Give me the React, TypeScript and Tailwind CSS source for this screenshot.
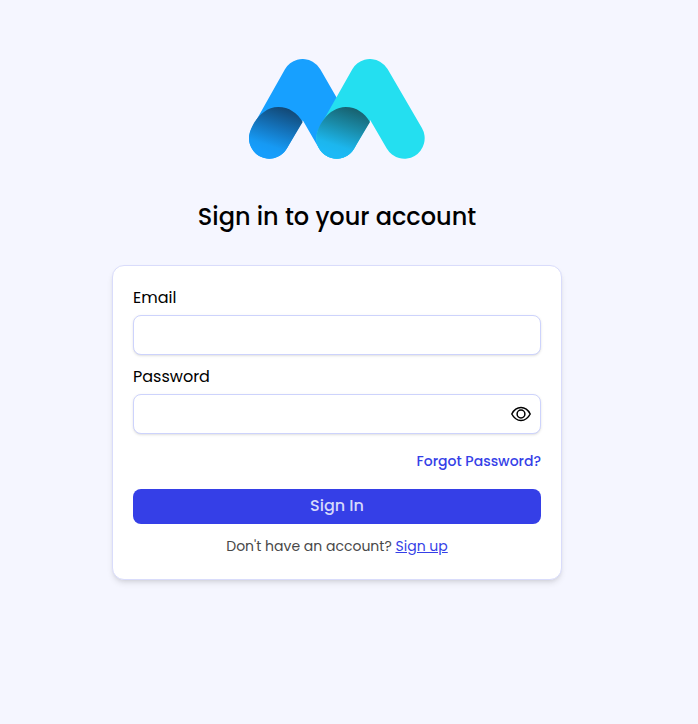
import { useState } from "react";

function Logo() {
  return (
    <svg viewBox="27 27 528 300" className="h-[100px] w-44" role="img" aria-label="Logo">
      <defs>
        <linearGradient id="foldBlue" gradientUnits="userSpaceOnUse" x1="140" y1="165" x2="92" y2="312">
          <stop offset="0" stopColor="#12426b" />
          <stop offset="0.45" stopColor="#146fb5" />
          <stop offset="0.85" stopColor="#1699f3" />
          <stop offset="1" stopColor="#169dfb" />
        </linearGradient>
        <linearGradient id="foldTeal" gradientUnits="userSpaceOnUse" x1="342" y1="165" x2="294" y2="312">
          <stop offset="0" stopColor="#175a65" />
          <stop offset="0.45" stopColor="#1a8ba8" />
          <stop offset="0.85" stopColor="#1cb6ed" />
          <stop offset="1" stopColor="#1cb9f5" />
        </linearGradient>
      </defs>
      <path d="M88 265 L188 88 L290 265" fill="none" stroke="#17a0ff" strokeWidth="122" strokeLinecap="round" strokeLinejoin="round" />
      <path d="M290 265 L390 88 L493 265" fill="none" stroke="#24dff0" strokeWidth="122" strokeLinecap="round" strokeLinejoin="round" />
      <path d="M188 216 L141 295 A61 61 0 0 1 27 265 C27 233 62 171 115 171 C147 171 172 189 188 216 Z" fill="url(#foldBlue)" />
      <path d="M390 216 L343 295 A61 61 0 0 1 229 265 C229 233 264 171 317 171 C349 171 374 189 390 216 Z" fill="url(#foldTeal)" />
    </svg>
  );
}

function EyeIcon() {
  return (
    <svg viewBox="0 0 20 16" className="h-4 w-5" fill="none" stroke="currentColor" strokeWidth="1.5" strokeLinejoin="round" aria-hidden="true">
      <path d="M0.8 8 C3 3.8 6.2 1.6 10 1.6 C13.8 1.6 17 3.8 19.2 8 C17 12.2 13.8 14.4 10 14.4 C6.2 14.4 3 12.2 0.8 8 Z" />
      <circle cx="10" cy="8" r="3.9" />
    </svg>
  );
}

const inputClass =
  "h-10 w-full rounded-lg border border-[#cdd3fc] bg-white px-3 text-base shadow-sm outline-none focus:border-[#353fe7]";

export default function App() {
  const [visible, setVisible] = useState(false);

  return (
    <main className="flex min-h-screen flex-col items-center bg-[#f5f6ff] pt-[59px] pr-9 pb-10 pl-3 font-[Poppins,Inter,sans-serif] text-black">
      <Logo />
      <h1 className="mt-10 text-2xl leading-9 font-medium">Sign in to your account</h1>
      <form
        className="mt-[30px] w-full max-w-[450px] rounded-xl border border-[#d9dcfb] bg-white p-5 shadow-md"
        onSubmit={(event) => event.preventDefault()}
      >
        <div className="flex flex-col gap-[5px]">
          <label htmlFor="email" className="text-base leading-6">Email</label>
          <input id="email" type="email" className={inputClass} />
        </div>
        <div className="mt-2.5 flex flex-col gap-[5px]">
          <label htmlFor="password" className="text-base leading-6">Password</label>
          <div className="relative">
            <input id="password" type={visible ? "text" : "password"} className={inputClass} />
            <button
              type="button"
              aria-label="Show password"
              className="absolute inset-y-0 right-2.5 flex items-center"
              onClick={() => setVisible(!visible)}
            >
              <EyeIcon />
            </button>
          </div>
        </div>
        <div className="mt-[15px] flex justify-end">
          <a href="#forgot" className="text-sm leading-6 font-medium text-[#353fe7]">Forgot Password?</a>
        </div>
        <button type="submit" className="mt-4 h-[35px] w-full rounded-lg bg-[#353fe7] pb-0.5 text-base font-medium text-[#d5d9fb]">
          Sign In
        </button>
        <p className="mt-2.5 pb-px text-center text-sm leading-6 text-[#484848]">
          Don't have an account?{" "}
          <a href="#signup" className="text-[#353fe7] underline">Sign up</a>
        </p>
      </form>
    </main>
  );
}
